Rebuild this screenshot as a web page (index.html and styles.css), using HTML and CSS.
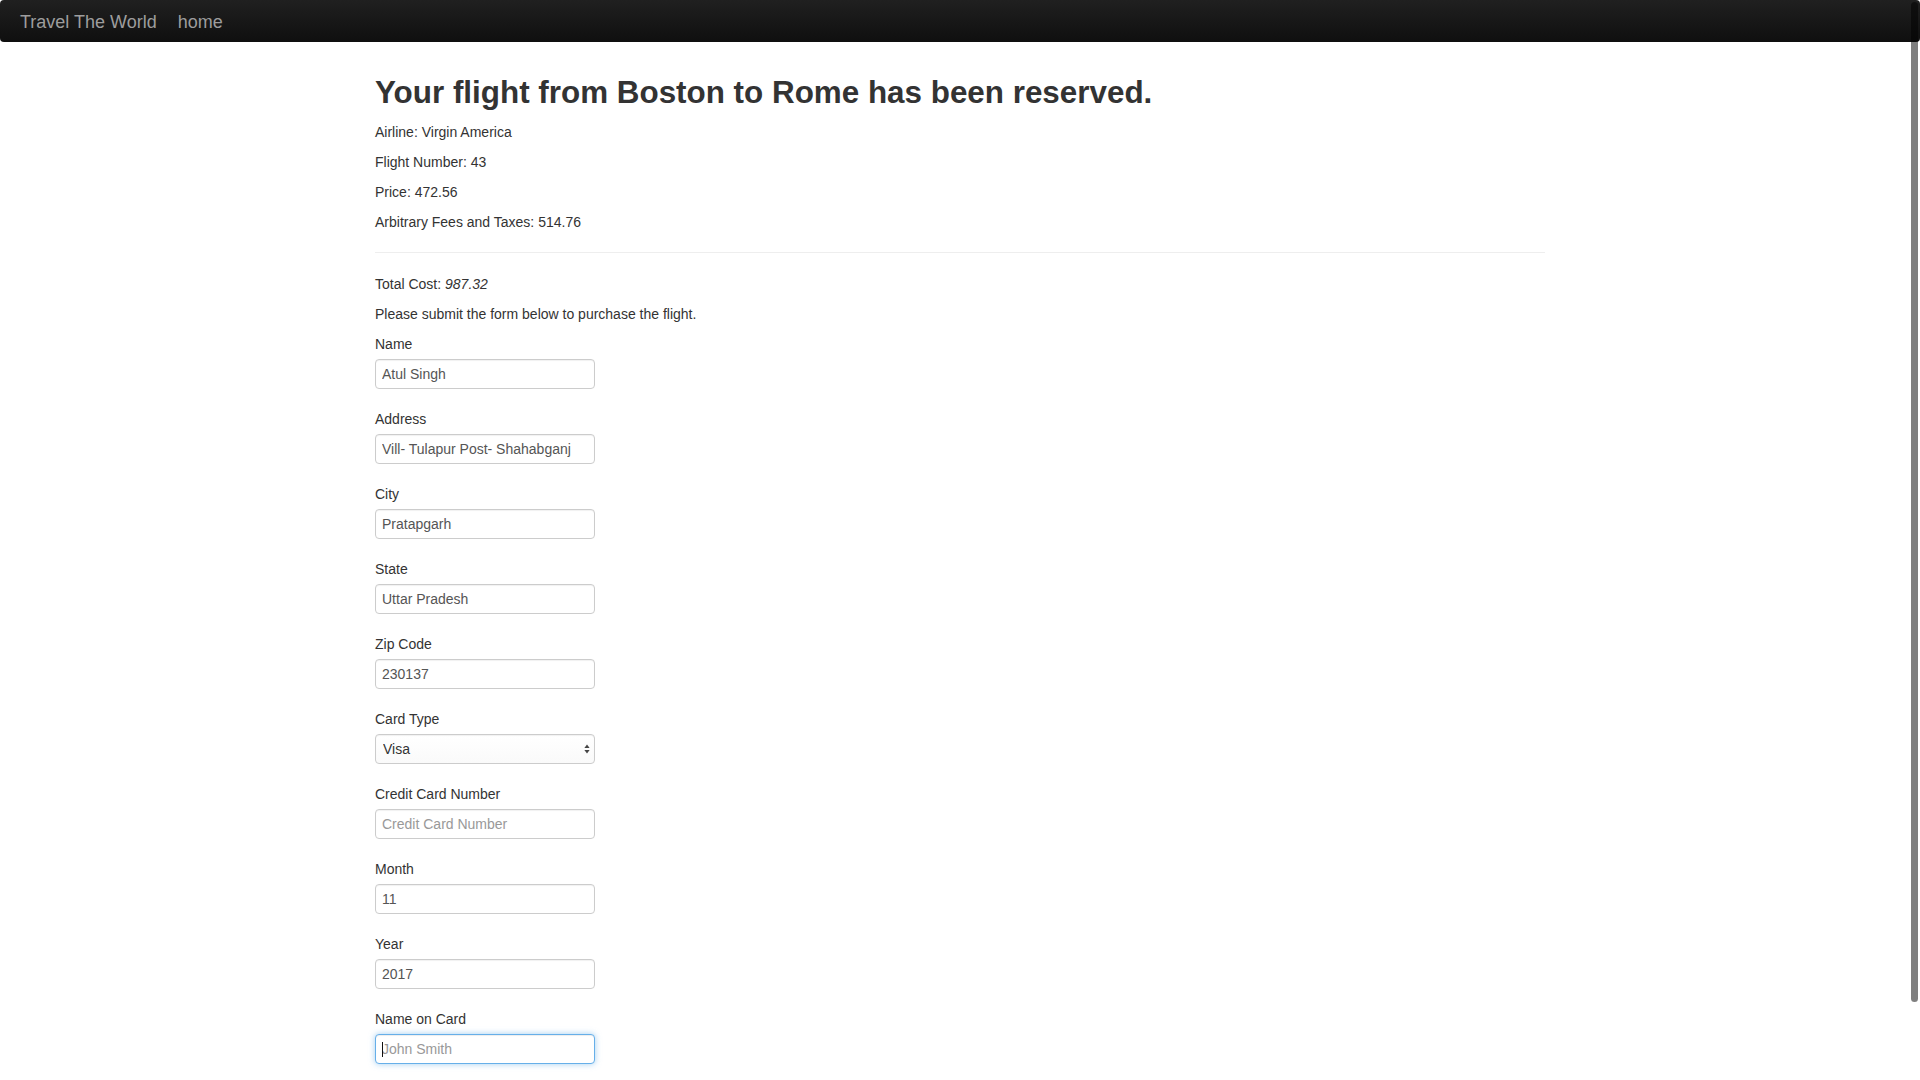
FILE: index.html
```html
<!DOCTYPE html>
<html lang="en">
<head>
<meta charset="utf-8">
<title>Travel The World</title>
<link rel="stylesheet" href="styles.css">
</head>
<body>
<nav class="navbar">
  <a class="brand" href="#">Travel The World</a>
  <a class="nav-link" href="#">home</a>
</nav>
<main class="container">
  <h1 class="title">Your flight from Boston to Rome has been reserved.</h1>
  <p>Airline: Virgin America</p>
  <p>Flight Number: 43</p>
  <p>Price: 472.56</p>
  <p>Arbitrary Fees and Taxes: 514.76</p>
  <hr class="divider">
  <p>Total Cost: <em>987.32</em></p>
  <p>Please submit the form below to purchase the flight.</p>
  <form class="form">
    <div class="form-group">
      <label class="label">Name</label>
      <input class="control" type="text" value="Atul Singh">
    </div>
    <div class="form-group">
      <label class="label">Address</label>
      <input class="control" type="text" value="Vill- Tulapur Post- Shahabganj">
    </div>
    <div class="form-group">
      <label class="label">City</label>
      <input class="control" type="text" value="Pratapgarh">
    </div>
    <div class="form-group">
      <label class="label">State</label>
      <input class="control" type="text" value="Uttar Pradesh">
    </div>
    <div class="form-group">
      <label class="label">Zip Code</label>
      <input class="control" type="text" value="230137">
    </div>
    <div class="form-group">
      <label class="label">Card Type</label>
      <div class="select-wrap">
        <select class="control select">
          <option>Visa</option>
          <option>MasterCard</option>
          <option>American Express</option>
        </select>
        <svg class="select-arrows" width="6" height="10" viewBox="0 0 6 10" aria-hidden="true">
          <path d="M3 0.5 L5.6 4 L0.4 4 Z" fill="#444"/>
          <path d="M3 9.5 L5.6 6 L0.4 6 Z" fill="#444"/>
        </svg>
      </div>
    </div>
    <div class="form-group">
      <label class="label">Credit Card Number</label>
      <input class="control" type="text" placeholder="Credit Card Number">
    </div>
    <div class="form-group">
      <label class="label">Month</label>
      <input class="control" type="text" value="11">
    </div>
    <div class="form-group">
      <label class="label">Year</label>
      <input class="control" type="text" value="2017">
    </div>
    <div class="form-group">
      <label class="label">Name on Card</label>
      <div class="caret-wrap">
        <input class="control focused" type="text" placeholder="John Smith">
        <span class="caret"></span>
      </div>
    </div>
  </form>
</main>
<div class="scroll-thumb"></div>
</body>
</html>
```
FILE: styles.css
```css
html {
  overflow: hidden;
}
body {
  margin: 0;
  font-family: "Liberation Sans", Arial, Helvetica, sans-serif;
  font-size: 14px;
  line-height: 20px;
  color: #333;
  background: #fff;
}
.navbar {
  height: 42px;
  display: flex;
  align-items: center;
  gap: 21px;
  padding-left: 20px;
  background: linear-gradient(#202020, #0f0f0f);
  border-radius: 4px;
}
.brand,
.nav-link {
  font-size: 18px;
  line-height: 42px;
  padding-top: 1px;
  color: #9d9d9d;
  text-decoration: none;
}
.container {
  width: 1170px;
  margin: 0 auto;
}
.title {
  margin: 34px 0 12px;
  font-size: 31.4px;
  line-height: 34px;
  font-weight: 700;
  color: #333;
}
p {
  margin: 0 0 10px;
}
.divider {
  margin: 20px 0 21px;
  border: 0;
  border-top: 1px solid #eee;
}
.form {
  margin: 0;
}
.form-group {
  margin-bottom: 20px;
}
.label {
  display: block;
  margin-bottom: 5px;
  font-weight: 400;
}
.control {
  display: block;
  box-sizing: border-box;
  width: 220px;
  height: 30px;
  margin: 0;
  padding: 0 6px;
  font-family: "Liberation Sans", Arial, Helvetica, sans-serif;
  font-size: 14px;
  color: #555;
  background: #fff;
  border: 1px solid #ccc;
  border-radius: 4px;
  box-shadow: inset 0 1px 1px rgba(0, 0, 0, 0.06);
  outline: none;
}
.control::placeholder {
  color: #999;
}
.select-wrap,
.caret-wrap {
  position: relative;
  width: 220px;
}
.select {
  appearance: none;
  -webkit-appearance: none;
  padding-left: 7px;
  color: #333;
  background: linear-gradient(#fff, #fafafa);
}
.select-arrows {
  position: absolute;
  right: 5px;
  top: 10px;
}
.focused {
  border-color: #66afe9;
  box-shadow: inset 0 1px 1px rgba(0, 0, 0, 0.075), 0 0 6px rgba(102, 175, 233, 0.6);
}
.caret {
  position: absolute;
  left: 7px;
  top: 8px;
  width: 1px;
  height: 15px;
  background: #111;
}
.scroll-thumb {
  position: fixed;
  top: 2px;
  right: 2px;
  width: 7px;
  height: 1000px;
  border-radius: 4px;
  background: rgba(0, 0, 0, 0.5);
}
```
